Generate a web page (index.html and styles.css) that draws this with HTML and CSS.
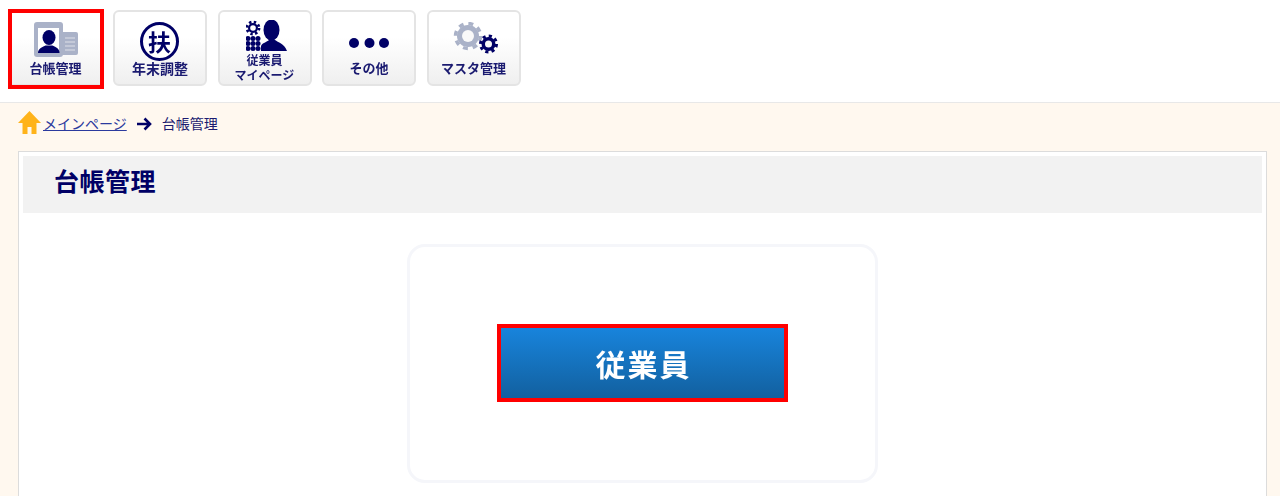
FILE: index.html
```html
<!DOCTYPE html>
<html lang="ja">
<head>
<meta charset="utf-8">
<title>台帳管理</title>
<link rel="stylesheet" href="styles.css">
</head>
<body>
<header class="top">
  <nav class="nav">
    <a class="nav-btn is-marked">
      <svg class="ico ico-ledger" width="46" height="36" viewBox="0 0 46 36">
        <rect x="27" y="10" width="18" height="23" rx="2" fill="#aab2c8"/>
        <path d="M32 16h10M32 20h10M32 24h10M32 28h10" stroke="#dde0e8" stroke-width="1.200"/>
        <rect x="1" y="0" width="29" height="35" rx="3" fill="#aab2c8"/>
        <rect x="5" y="6" width="21" height="25" fill="#fff"/>
        <ellipse cx="16" cy="15.500" rx="6.500" ry="7.500" fill="#000066"/>
        <path d="M5 31c0-4 3-5.500 7.500-7.500h7c4.500 2 7 3.500 7 7.500z" fill="#000066"/>
      </svg>
      <span class="lbl">台帳管理</span>
    </a>
    <a class="nav-btn">
      <span class="badge">扶</span>
      <span class="lbl lbl-wide">年末調整</span>
    </a>
    <a class="nav-btn nav-btn-two">
      <svg class="ico ico-staff" width="42" height="32" viewBox="0 0 42 32">
        <g fill="#000066">
          <circle cx="7" cy="8" r="5"/>
          <circle cx="7" cy="8" r="6" fill="none" stroke="#000066" stroke-width="2.800" stroke-dasharray="2.360 2.360"/>
          <circle cx="2" cy="18.500" r="2.500"/><circle cx="7" cy="18.500" r="2.500"/><circle cx="12" cy="18.500" r="2.500"/>
          <circle cx="2" cy="23.500" r="2.500"/><circle cx="7" cy="23.500" r="2.500"/><circle cx="12" cy="23.500" r="2.500"/>
          <circle cx="2" cy="28.500" r="2.500"/><circle cx="7" cy="28.500" r="2.500"/><circle cx="12" cy="28.500" r="2.500"/>
          <ellipse cx="25.500" cy="10" rx="8" ry="10.500"/>
          <path d="M15 31v-5c1-3 6-4 8-6h6c3 2.500 9 3 12 11z"/>
        </g>
        <circle cx="7" cy="8" r="2.800" fill="#fff"/>
      </svg>
      <span class="lbl-sm">従業員</span>
      <span class="lbl lbl-two">マイページ</span>
    </a>
    <a class="nav-btn">
      <svg class="ico ico-dots" width="40" height="12" viewBox="0 0 40 12">
        <g fill="#000066"><circle cx="5" cy="6" r="5"/><circle cx="20.500" cy="6" r="5"/><circle cx="35" cy="6" r="5"/></g>
      </svg>
      <span class="lbl">その他</span>
    </a>
    <a class="nav-btn">
      <svg class="ico ico-gears" width="46" height="32" viewBox="0 0 46 32">
        <circle cx="15" cy="14" r="11" fill="#aab2c8"/>
        <circle cx="15" cy="14" r="12.500" fill="none" stroke="#aab2c8" stroke-width="3.500" stroke-dasharray="4.910 4.910"/>
        <circle cx="15" cy="14" r="6" fill="#f9f9f9"/>
        <circle cx="35.500" cy="22" r="7" fill="#000066"/>
        <circle cx="35.500" cy="22" r="8" fill="none" stroke="#000066" stroke-width="3" stroke-dasharray="3.140 3.140"/>
        <circle cx="35.500" cy="22" r="3.500" fill="#f6f6f6"/>
      </svg>
      <span class="lbl">マスタ管理</span>
    </a>
  </nav>
</header>
<main class="page">
  <div class="crumbs">
    <svg class="home" width="24" height="23" viewBox="0 0 24 23"><path d="M11.500 0L0 12h4.500v11h5v-7h4v7h5V12H23z" fill="#ffb31a"/></svg>
    <a class="crumb-link">メインページ</a>
    <svg class="arrow" width="16" height="14" viewBox="0 0 16 14"><path d="M1 7h13M8.500 1.500L14 7l-5.500 5.500" fill="none" stroke="#000066" stroke-width="2.600"/></svg>
    <span class="crumb-cur">台帳管理</span>
  </div>
  <section class="panel">
    <h1 class="title">台帳管理</h1>
    <div class="card">
      <a class="primary"><span class="primary-txt">従業員</span></a>
    </div>
  </section>
</main>
</body>
</html>
```
FILE: styles.css
```css
* { box-sizing: border-box; }
html, body { margin: 0; height: 496px; overflow: hidden; }
body {
  background: #fff;
  font-family: "Noto Sans CJK JP", "Liberation Sans", sans-serif;
  color: #000066;
}
.top {
  height: 103px;
  border-bottom: 1px solid #e8e8e8;
  padding: 10px 0 0 8.500px;
}
.nav { display: flex; gap: 10.500px; }
.nav-btn {
  position: relative;
  flex: 0 0 94px;
  height: 76px;
  display: flex;
  flex-direction: column;
  align-items: center;
  justify-content: flex-end;
  padding-bottom: 8px;
  border: 2px solid #e4e4e4;
  border-radius: 6px;
  background: linear-gradient(#ffffff 35%, #efefef);
}
.nav-btn-two { padding-bottom: 2px; }
.is-marked { border-radius: 0; }
.is-marked::after {
  content: "";
  position: absolute;
  inset: -3px -3.500px -5px -2.500px;
  border: 4px solid #ff0000;
}
.ico { position: absolute; left: 50%; transform: translateX(-50%); filter: blur(.3px); }
.ico-ledger { top: 10px; }
.ico-staff { top: 8px; left: 47px; }
.ico-dots { top: 25px; }
.ico-gears { top: 10px; left: 47px; }
.badge {
  position: absolute;
  top: 10px;
  left: 25px;
  width: 39px;
  height: 39px;
  display: flex;
  align-items: center;
  justify-content: center;
  border: 3px solid #000066;
  border-radius: 50%;
  background: #fff;
  font-size: 23px;
  font-weight: 700;
  line-height: 1;
  color: #000066;
  filter: blur(.3px);
}
.lbl, .lbl-sm { filter: blur(.3px); white-space: nowrap; color: #1a1a70; font-weight: 700; }
.lbl { font-size: 13px; line-height: 16px; }
.lbl-wide { font-size: 14px; }
.lbl-two { font-size: 12px; line-height: 15px; }
.lbl-sm { font-size: 12px; line-height: 15px; }
.page {
  height: 393px;
  background: #fff8ef;
  padding: 0 13px 0 18px;
}
.crumbs {
  height: 48px;
  display: flex;
  align-items: center;
  font-size: 14px;
  padding-bottom: 2px;
}
.home { margin-top: -8px; flex: none; }
.crumb-link { margin-left: 1px; color: #2b3a9e; text-decoration: underline; font-size: 14px; margin-top: -6px; }
.arrow { margin: -5px 0 0 9px; }
.crumb-cur { margin: -6px 0 0 10px; font-size: 14px; color: #1a1a70; }
.panel {
  height: 345px;
  background: #fff;
  border: 1px solid #dcdcdc;
  border-bottom: 0;
  padding: 4px 4px 0;
}
.title {
  margin: 0;
  height: 57px;
  background: #f2f2f2;
  padding-left: 31px;
  font-size: 25px;
  line-height: 48px;
  font-weight: 700;
  letter-spacing: .5px;
  color: #000066;
}
.card {
  width: 471px;
  height: 239px;
  margin: 31px 0 0 384px;
  border: 3px solid #f5f6fa;
  border-radius: 18px;
  padding-top: 81px;
  display: flex;
  justify-content: center;
  align-items: flex-start;
}
.primary {
  width: 283px;
  height: 70px;
  display: flex;
  align-items: center;
  justify-content: center;
  background: linear-gradient(#1884dc, #12609f);
  outline: 4px solid #ff0000;
}
.primary-txt {
  color: #fff;
  font-size: 30px;
  font-weight: 700;
  letter-spacing: 2px;
  margin: 0 -2px 0 0;
  filter: blur(.3px);
}
```
